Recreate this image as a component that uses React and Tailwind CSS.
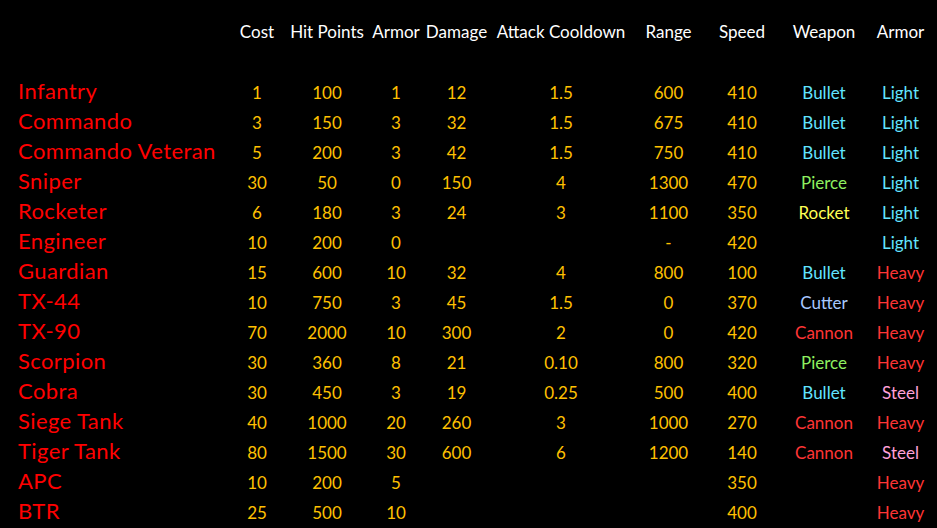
import React from 'react'

const cols = [
  { label: 'Cost', w: 'w-[54px]' },
  { label: 'Hit Points', w: 'w-[86px]' },
  { label: 'Armor', w: 'w-[52px]' },
  { label: 'Damage', w: 'w-[69px]' },
  { label: 'Attack Cooldown', w: 'w-[140px]' },
  { label: 'Range', w: 'w-[75px]' },
  { label: 'Speed', w: 'w-[72px]' },
  { label: 'Weapon', w: 'w-[92px]' },
  { label: 'Armor', w: 'w-[61px]' },
]

const weaponColor = {
  Bullet: 'text-[#62e4ff]',
  Pierce: 'text-[#8ef060]',
  Rocket: 'text-[#ffff55]',
  Cutter: 'text-[#a8c8ff]',
  Cannon: 'text-[#ff3535]',
}

const armorColor = {
  Light: 'text-[#62e4ff]',
  Heavy: 'text-[#ff3535]',
  Steel: 'text-[#ffa0d8]',
}

const units = [
  ['Infantry', '1', '100', '1', '12', '1.5', '600', '410', 'Bullet', 'Light'],
  ['Commando', '3', '150', '3', '32', '1.5', '675', '410', 'Bullet', 'Light'],
  ['Commando Veteran', '5', '200', '3', '42', '1.5', '750', '410', 'Bullet', 'Light'],
  ['Sniper', '30', '50', '0', '150', '4', '1300', '470', 'Pierce', 'Light'],
  ['Rocketer', '6', '180', '3', '24', '3', '1100', '350', 'Rocket', 'Light'],
  ['Engineer', '10', '200', '0', '', '', '-', '420', '', 'Light'],
  ['Guardian', '15', '600', '10', '32', '4', '800', '100', 'Bullet', 'Heavy'],
  ['TX-44', '10', '750', '3', '45', '1.5', '0', '370', 'Cutter', 'Heavy'],
  ['TX-90', '70', '2000', '10', '300', '2', '0', '420', 'Cannon', 'Heavy'],
  ['Scorpion', '30', '360', '8', '21', '0.10', '800', '320', 'Pierce', 'Heavy'],
  ['Cobra', '30', '450', '3', '19', '0.25', '500', '400', 'Bullet', 'Steel'],
  ['Siege Tank', '40', '1000', '20', '260', '3', '1000', '270', 'Cannon', 'Heavy'],
  ['Tiger Tank', '80', '1500', '30', '600', '6', '1200', '140', 'Cannon', 'Steel'],
  ['APC', '10', '200', '5', '', '', '', '350', '', 'Heavy'],
  ['BTR', '25', '500', '10', '', '', '', '400', '', 'Heavy'],
]

const App = () => {
  return (
    <div className="w-[937px] h-[528px] bg-black overflow-hidden pt-[19px] font-['Lato',sans-serif]">
      <div className="flex items-baseline h-[30px] text-white text-[17px]">
        <div className="w-[230px] shrink-0"></div>
        {cols.map((c, i) => (
          <div key={i} className={`${c.w} shrink-0 flex justify-center whitespace-nowrap`}>{c.label}</div>
        ))}
      </div>

      <div className="mt-[25px] flex flex-col">
        {units.map((u) => (
          <div key={u[0]} className="flex items-baseline h-[30px]">
            <div className="w-[230px] shrink-0 pl-[18px] text-[22px] tracking-[0.4px] text-[#ff0000] whitespace-nowrap">{u[0]}</div>
            {u.slice(1).map((v, i) => {
              let color = 'text-[#ffc000]'
              if (i === 7) color = weaponColor[v] || ''
              if (i === 8) color = armorColor[v] || ''
              return (
                <div key={i} className={`${cols[i].w} shrink-0 flex justify-center whitespace-nowrap text-[17px] ${color}`}>
                  {v}
                </div>
              )
            })}
          </div>
        ))}
      </div>
    </div>
  )
}

export default App
